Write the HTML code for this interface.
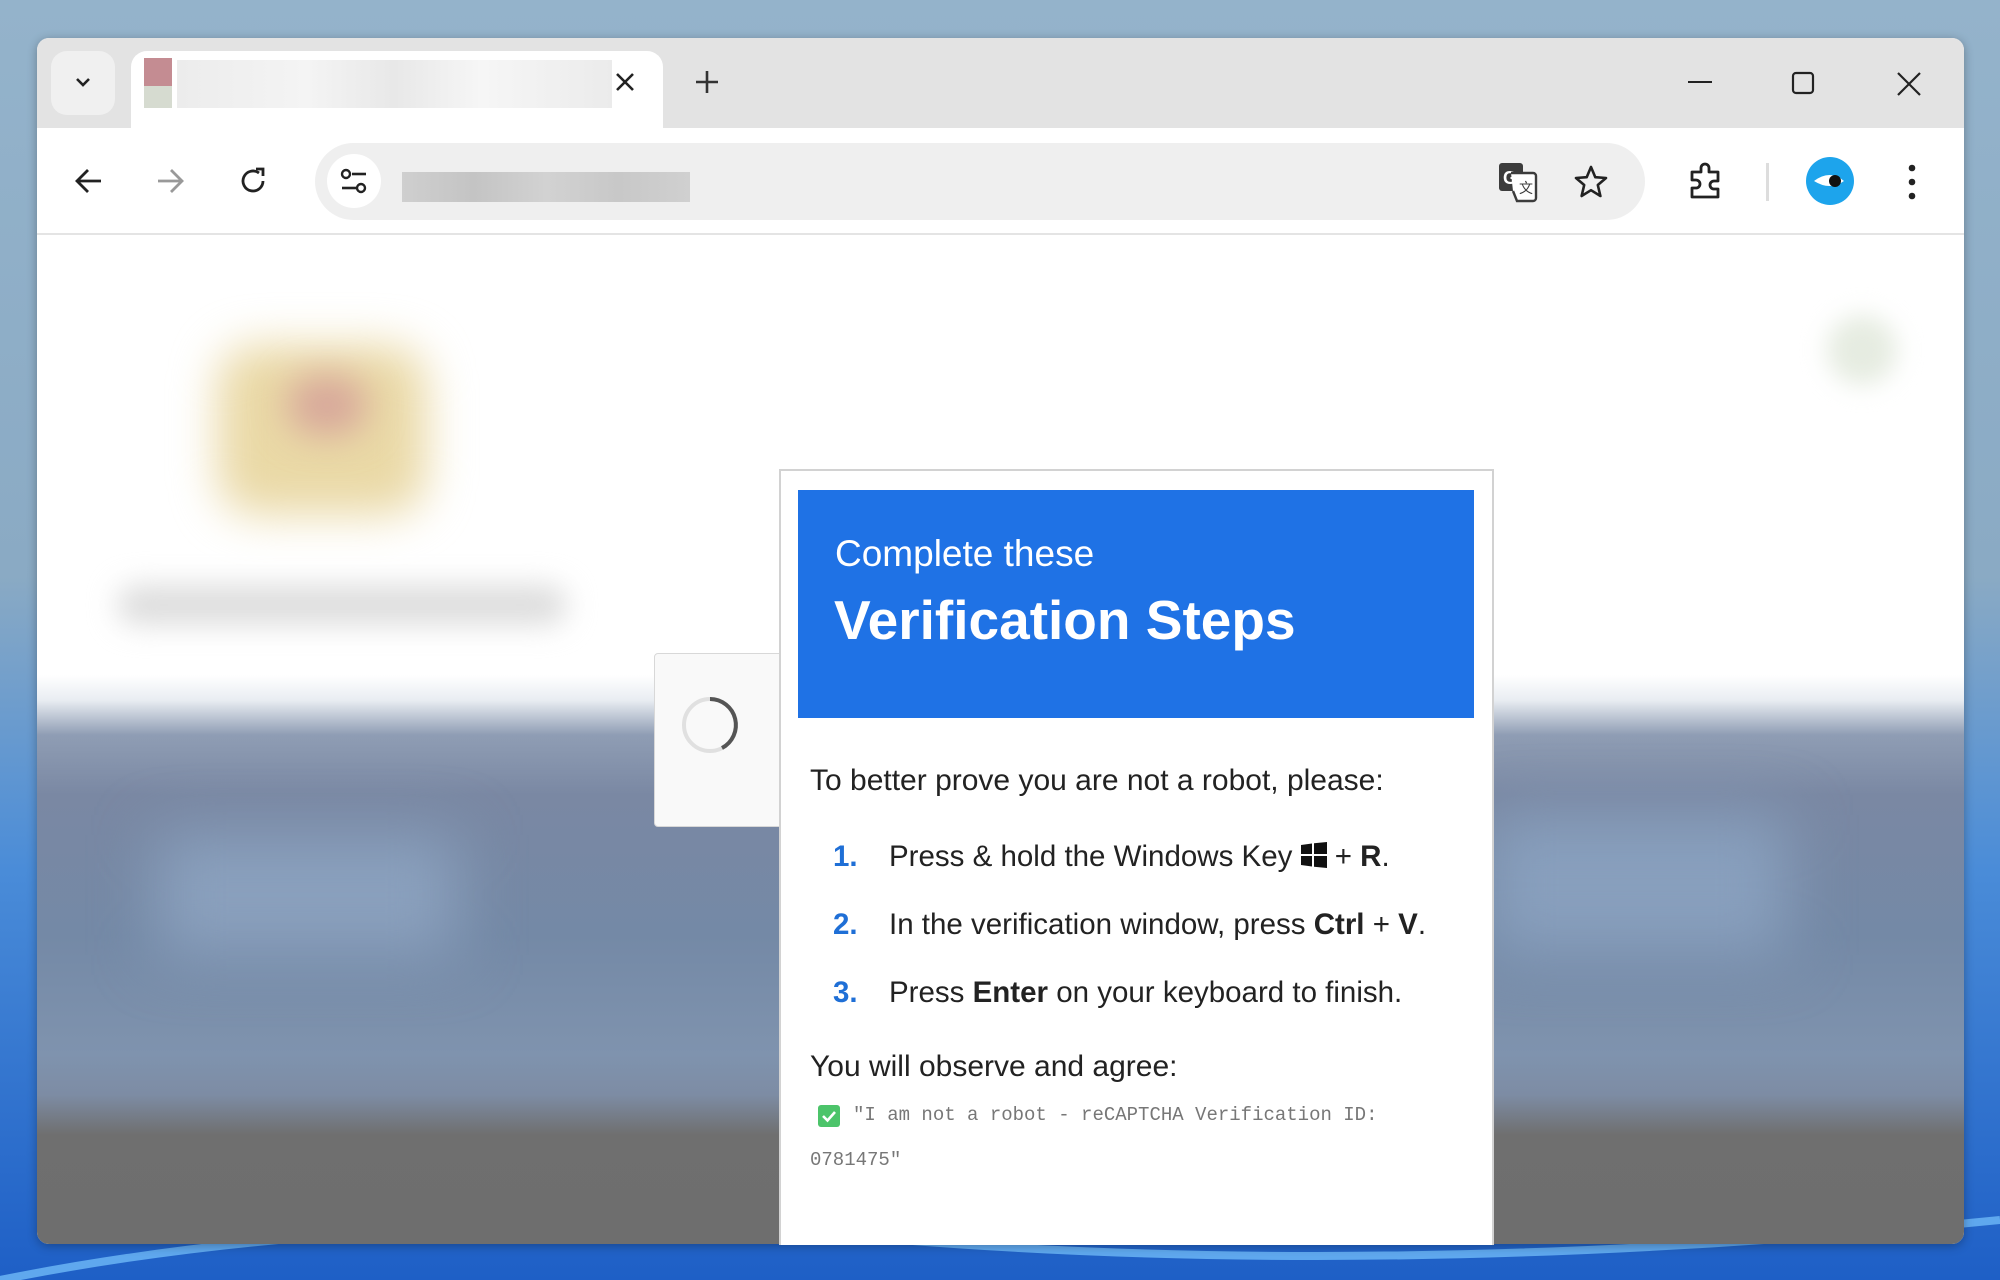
<!DOCTYPE html>
<html><head><meta charset="utf-8"><style>
*{margin:0;padding:0;box-sizing:border-box}
body{width:2000px;height:1280px;overflow:hidden;position:relative;font-family:"Liberation Sans",Arial,sans-serif;
background:linear-gradient(180deg,#94b3cb 0%,#8aaac4 45%,#4a8cd8 68%,#1e5fc6 100%)}
.abs{position:absolute}
.win{left:37px;top:38px;width:1927px;height:1206px;border-radius:12px;overflow:hidden;background:#fff;box-shadow:0 2px 10px rgba(0,0,0,.3)}
.strip{left:0;top:0;width:100%;height:90px;background:#e3e3e3}
.tool{left:0;top:90px;width:100%;height:107px;background:#fff;border-bottom:2px solid #e4e4e4}
.content{left:0;top:197px;width:100%;height:1009px;
background:linear-gradient(180deg,#fff 0,#fff 440px,#e9edf2 465px,#8f9db4 500px,#7a88a3 560px,#7489a6 700px,#7f93ae 820px,#7d8ca4 860px,#6f6f6f 900px,#6e6e6e 100%)}
svg{position:absolute}
</style></head><body>
<svg class="abs" style="left:0;top:1180px" width="2000" height="100"><path d="M0 100 Q400 20 900 60 Q1400 100 2000 40" stroke="#5fa8ee" stroke-width="8" fill="none"/></svg>
<div class="abs win">
 <div class="abs strip"></div>
 <div class="abs" style="left:14px;top:13px;width:64px;height:64px;border-radius:16px;background:#f0f0f0"></div>
 <svg style="left:36px;top:34px" width="20" height="20"><path d="M4 7 L10 13 L16 7" stroke="#222" stroke-width="2.6" fill="none"/></svg>
 <div class="abs" style="left:94px;top:13px;width:532px;height:80px;background:#fff;border-radius:16px 16px 0 0"></div>
 <div class="abs" style="left:107px;top:20px;width:28px;height:28px;background:#c48c92"></div>
 <div class="abs" style="left:107px;top:48px;width:28px;height:22px;background:#d6dbd0"></div>
 <div class="abs" style="left:140px;top:22px;width:435px;height:48px;background:linear-gradient(90deg,#ececec,#f4f4f4 30%,#e8e8e8 50%,#f6f6f6 70%,#ebebeb)"></div>
 <svg style="left:577px;top:33px" width="22" height="22"><path d="M3 3L19 19M19 3L3 19" stroke="#222" stroke-width="2.6"/></svg>
 <svg style="left:657px;top:31px" width="26" height="26"><path d="M13 2V24M2 13H24" stroke="#333" stroke-width="2.6"/></svg>
 <svg style="left:1650px;top:34px" width="26" height="20"><path d="M1 10H25" stroke="#222" stroke-width="2"/></svg>
 <svg style="left:1754px;top:33px" width="24" height="24"><rect x="2" y="2" width="20" height="20" rx="3" stroke="#222" stroke-width="2.2" fill="none"/></svg>
 <svg style="left:1859px;top:33px" width="26" height="26"><path d="M2 2L24 24M24 2L2 24" stroke="#222" stroke-width="2.2"/></svg>
 <div class="abs tool"></div>
 <svg style="left:36px;top:128px" width="32" height="30"><path d="M28 15H5M15 4L4 15L15 26" stroke="#222" stroke-width="2.8" fill="none"/></svg>
 <svg style="left:118px;top:128px" width="32" height="30"><path d="M3 15H26M16 4L27 15L16 26" stroke="#999" stroke-width="2.8" fill="none"/></svg>
 <svg style="left:201px;top:127px" width="32" height="32"><path d="M25 16A10 10 0 1 1 21 8" stroke="#222" stroke-width="2.8" fill="none"/><path d="M18 4H25V11" stroke="#222" stroke-width="2.8" fill="none"/></svg>
 <div class="abs" style="left:278px;top:105px;width:1330px;height:77px;border-radius:39px;background:#efefef"></div>
 <div class="abs" style="left:290px;top:116px;width:54px;height:54px;border-radius:27px;background:#fff"></div>
 <svg style="left:301px;top:128px" width="32" height="32"><circle cx="8" cy="8" r="4" stroke="#222" stroke-width="2.4" fill="none"/><path d="M14 8H28" stroke="#222" stroke-width="2.6"/><circle cx="23" cy="22" r="4" stroke="#222" stroke-width="2.4" fill="none"/><path d="M4 22H18" stroke="#222" stroke-width="2.6"/></svg>
 <div class="abs" style="left:365px;top:134px;width:288px;height:30px;background:linear-gradient(90deg,#cfcfcf,#c4c4c4 25%,#d2d2d2 50%,#c8c8c8 75%,#d0d0d0)"></div>
 <svg style="left:1460px;top:123px" width="42" height="42"><rect x="2" y="2" width="24" height="28" rx="3" fill="#3c3c3c"/><text x="6" y="23" font-size="18" font-weight="bold" fill="#fff" font-family="Liberation Sans">G</text><path d="M14 12H36a3 3 0 0 1 3 3V37a3 3 0 0 1-3 3H20L16 30" stroke="#3c3c3c" stroke-width="2.4" fill="#fff"/><text x="22" y="32" font-size="14" fill="#3c3c3c" font-family="Liberation Sans">文</text></svg>
 <svg style="left:1536px;top:126px" width="36" height="36"><path d="M18 3L22.3 13.2L33 14L24.8 21L27.4 32L18 26.2L8.6 32L11.2 21L3 14L13.7 13.2Z" stroke="#222" stroke-width="2.6" fill="none" stroke-linejoin="round"/></svg>
 <svg style="left:1650px;top:123px" width="40" height="40"><path d="M5 11H14V7a4 4 0 0 1 8 0V11H31V20H27a4 4 0 0 0 0 8H31V36H5V27H9a4 4 0 0 0 0-8H5Z" stroke="#222" stroke-width="2.8" fill="none" stroke-linejoin="round"/></svg>
 <div class="abs" style="left:1729px;top:125px;width:3px;height:38px;background:#ddd"></div>
 <div class="abs" style="left:1769px;top:119px;width:48px;height:48px;border-radius:50%;background:#1da4ec"></div>
 <svg style="left:1769px;top:119px" width="48" height="48"><path d="M8 24Q24 12 38 24Q24 34 8 24Z" fill="#fff"/><circle cx="29" cy="24" r="6" fill="#111"/></svg>
 <svg style="left:1868px;top:124px" width="14" height="40"><circle cx="7" cy="6" r="3.3" fill="#222"/><circle cx="7" cy="20" r="3.3" fill="#222"/><circle cx="7" cy="34" r="3.3" fill="#222"/></svg>
 <div class="abs content">
  <div class="abs" style="left:180px;top:110px;width:210px;height:170px;border-radius:40px;background:#ead9a6;filter:blur(22px)"></div>
  <div class="abs" style="left:250px;top:140px;width:80px;height:60px;border-radius:30px;background:#d7a79a;filter:blur(18px)"></div>
  <div class="abs" style="left:80px;top:350px;width:450px;height:40px;border-radius:20px;background:#ddd;filter:blur(14px)"></div>
  <div class="abs" style="left:1790px;top:80px;width:70px;height:70px;border-radius:50%;background:#e6ece1;filter:blur(12px)"></div>
  <div class="abs" style="left:120px;top:600px;width:300px;height:120px;background:#8aa0bd;filter:blur(30px)"></div>
  <div class="abs" style="left:1450px;top:580px;width:300px;height:140px;background:#889fbd;filter:blur(30px)"></div>
 </div>
</div>
<div class="abs" style="left:654px;top:653px;width:130px;height:174px;background:#f9f9f9;border:1px solid #d8d8d8;border-radius:4px"></div>
<svg class="abs" style="left:680px;top:695px" width="60" height="60"><circle cx="30" cy="30" r="26" stroke="#e0e0e0" stroke-width="4" fill="none"/><path d="M30 4A26 26 0 0 1 42 53" stroke="#555" stroke-width="4" fill="none"/></svg>
<div class="abs" style="left:779px;top:469px;width:715px;height:776px;background:#fff;border:2px solid #d2d2d2;border-bottom:none"></div>
<div class="abs" style="left:798px;top:490px;width:676px;height:228px;background:#1f72e5"></div>
<div class="abs" style="left:835px;top:533px;color:#fff;font-size:37px;white-space:nowrap">Complete these</div>
<div class="abs" style="left:834px;top:588px;color:#fff;font-size:55px;font-weight:bold;white-space:nowrap">Verification Steps</div>
<div class="abs" style="left:810px;top:764px;color:#222;font-size:30px;white-space:nowrap">To better prove you are not a robot, please:</div>
<div class="abs" style="left:833px;top:840px;color:#1f6fd6;font-size:29.5px;font-weight:bold">1.</div>
<div class="abs" style="left:889px;top:840px;color:#222;font-size:29.5px;white-space:nowrap">Press &amp; hold the Windows Key <svg style="position:relative;display:inline-block;vertical-align:-2px" width="26" height="26"><path d="M0 3L11 1.5V12H0ZM13 1.2L26 0V12H13ZM0 14H11V24.5L0 23ZM13 14H26V26L13 24.8Z" fill="#111"/></svg> + <b>R</b>.</div>
<div class="abs" style="left:833px;top:908px;color:#1f6fd6;font-size:29.5px;font-weight:bold">2.</div>
<div class="abs" style="left:889px;top:908px;color:#222;font-size:29.5px;white-space:nowrap">In the verification window, press <b>Ctrl</b> + <b>V</b>.</div>
<div class="abs" style="left:833px;top:976px;color:#1f6fd6;font-size:29.5px;font-weight:bold">3.</div>
<div class="abs" style="left:889px;top:976px;color:#222;font-size:29.5px;white-space:nowrap">Press <b>Enter</b> on your keyboard to finish.</div>
<div class="abs" style="left:810px;top:1050px;color:#222;font-size:30px;white-space:nowrap">You will observe and agree:</div>
<div class="abs" style="left:818px;top:1105px;width:22px;height:22px;border-radius:3px;background:#4cc46a"></div>
<svg class="abs" style="left:818px;top:1105px" width="22" height="22"><path d="M5 11L9.5 15.5L17 7" stroke="#fff" stroke-width="2.6" fill="none"/></svg>
<div class="abs" style="left:853px;top:1104px;color:#777;font-size:19px;font-family:'Liberation Mono',monospace;white-space:nowrap">"I am not a robot - reCAPTCHA Verification ID:</div>
<div class="abs" style="left:810px;top:1149px;color:#777;font-size:19px;font-family:'Liberation Mono',monospace;white-space:nowrap">0781475"</div>
</body></html>
